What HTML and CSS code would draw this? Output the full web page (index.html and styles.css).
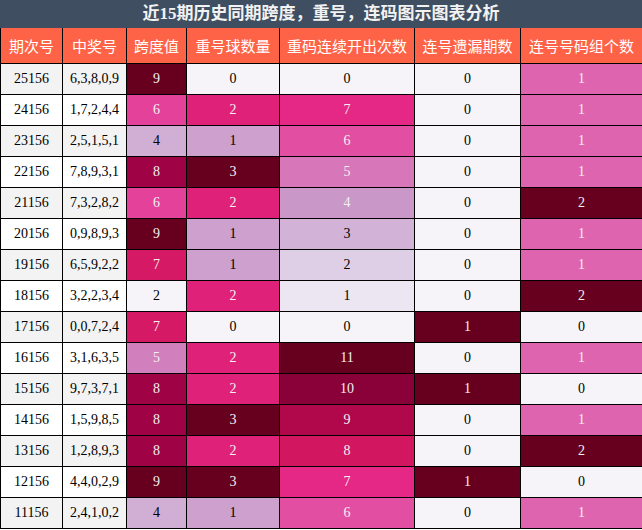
FILE: index.html
```html
<!DOCTYPE html>
<html lang="zh">
<head>
<meta charset="utf-8">
<link rel="stylesheet" href="styles.css">
</head>
<body>
<div class="title">近15期历史同期跨度，重号，连码图示图表分析</div>
<table class="grid" id="grid">
<colgroup>
<col class="w1"><col class="w2"><col class="w3"><col class="w4"><col class="w5"><col class="w6"><col class="w7">
</colgroup>
<thead>
<tr><th>期次号</th><th>中奖号</th><th>跨度值</th><th>重号球数量</th><th>重码连续开出次数</th><th>连号遗漏期数</th><th>连号号码组个数</th></tr>
</thead>
<tbody>
<tr><td class="p">25156</td><td class="p">6,3,8,0,9</td><td class="g">9</td><td class="g">0</td><td class="g">0</td><td class="g">0</td><td class="g">1</td></tr>
<tr><td class="p">24156</td><td class="p">1,7,2,4,4</td><td class="g">6</td><td class="g">2</td><td class="g">7</td><td class="g">0</td><td class="g">1</td></tr>
<tr><td class="p">23156</td><td class="p">2,5,1,5,1</td><td class="g">4</td><td class="g">1</td><td class="g">6</td><td class="g">0</td><td class="g">1</td></tr>
<tr><td class="p">22156</td><td class="p">7,8,9,3,1</td><td class="g">8</td><td class="g">3</td><td class="g">5</td><td class="g">0</td><td class="g">1</td></tr>
<tr><td class="p">21156</td><td class="p">7,3,2,8,2</td><td class="g">6</td><td class="g">2</td><td class="g">4</td><td class="g">0</td><td class="g">2</td></tr>
<tr><td class="p">20156</td><td class="p">0,9,8,9,3</td><td class="g">9</td><td class="g">1</td><td class="g">3</td><td class="g">0</td><td class="g">1</td></tr>
<tr><td class="p">19156</td><td class="p">6,5,9,2,2</td><td class="g">7</td><td class="g">1</td><td class="g">2</td><td class="g">0</td><td class="g">1</td></tr>
<tr><td class="p">18156</td><td class="p">3,2,2,3,4</td><td class="g">2</td><td class="g">2</td><td class="g">1</td><td class="g">0</td><td class="g">2</td></tr>
<tr><td class="p">17156</td><td class="p">0,0,7,2,4</td><td class="g">7</td><td class="g">0</td><td class="g">0</td><td class="g">1</td><td class="g">0</td></tr>
<tr><td class="p">16156</td><td class="p">3,1,6,3,5</td><td class="g">5</td><td class="g">2</td><td class="g">11</td><td class="g">0</td><td class="g">1</td></tr>
<tr><td class="p">15156</td><td class="p">9,7,3,7,1</td><td class="g">8</td><td class="g">2</td><td class="g">10</td><td class="g">1</td><td class="g">0</td></tr>
<tr><td class="p">14156</td><td class="p">1,5,9,8,5</td><td class="g">8</td><td class="g">3</td><td class="g">9</td><td class="g">0</td><td class="g">1</td></tr>
<tr><td class="p">13156</td><td class="p">1,2,8,9,3</td><td class="g">8</td><td class="g">2</td><td class="g">8</td><td class="g">0</td><td class="g">2</td></tr>
<tr><td class="p">12156</td><td class="p">4,4,0,2,9</td><td class="g">9</td><td class="g">3</td><td class="g">7</td><td class="g">1</td><td class="g">0</td></tr>
<tr><td class="p">11156</td><td class="p">2,4,1,0,2</td><td class="g">4</td><td class="g">1</td><td class="g">6</td><td class="g">0</td><td class="g">1</td></tr>
</tbody>
</table>
<script src="script.js"></script>
</body>
</html>
```
FILE: styles.css
```css
body {
  margin: 0;
  background: #ffffff;
  font-family: "Liberation Serif", "Noto Sans CJK SC", serif;
}
.title {
  width: 642px;
  height: 28px;
  background: #3f4f61;
  color: #f2f2f2;
  font-weight: bold;
  font-size: 17px;
  line-height: 28px;
  text-align: center;
}
.grid {
  width: 642px;
  border-collapse: collapse;
  table-layout: fixed;
}
.w1 { width: 62px; }
.w2 { width: 64px; }
.w3 { width: 60px; }
.w4 { width: 93px; }
.w5 { width: 135px; }
.w6 { width: 106px; }
.w7 { width: 122px; }
.grid th,
.grid td {
  border: 1px solid #000000;
  padding: 0;
  text-align: center;
  vertical-align: middle;
  box-sizing: content-box;
}
.grid th {
  border-top: none;
  height: 35px;
  background: #ff6347;
  color: #ffffff;
  font-family: "Noto Sans CJK SC", sans-serif;
  font-weight: normal;
  font-size: 15px;
}
.grid td {
  height: 30px;
  font-size: 14px;
  color: #000000;
  background: #ffffff;
}
.grid tbody tr:nth-child(odd) td.p {
  background: #f3f3f3;
}
```
FILE: script.js
```js
(function () {
  var stops = [
    [247, 244, 249], [231, 225, 239], [212, 185, 218], [201, 148, 199],
    [223, 101, 176], [231, 41, 138], [206, 18, 86], [152, 0, 67], [103, 0, 31]
  ];
  function cmap(t) {
    var i = Math.min(255, Math.floor(t * 256));
    var x = (i / 255) * (stops.length - 1);
    var k = Math.min(stops.length - 2, Math.floor(x));
    var f = x - k;
    var a = stops[k], b = stops[k + 1];
    return [0, 1, 2].map(function (j) { return a[j] + (b[j] - a[j]) * f; });
  }
  function lum(c) {
    var v = c.map(function (x) {
      x = x / 255;
      return x <= 0.04045 ? x / 12.92 : Math.pow((x + 0.055) / 1.055, 2.4);
    });
    return 0.2126 * v[0] + 0.7152 * v[1] + 0.0722 * v[2];
  }
  var rows = document.querySelectorAll('#grid tbody tr');
  for (var col = 2; col < 7; col++) {
    var vals = [];
    rows.forEach(function (r) { vals.push(parseFloat(r.children[col].textContent)); });
    var mn = Math.min.apply(null, vals), mx = Math.max.apply(null, vals);
    rows.forEach(function (r, idx) {
      var t = mx === mn ? 0 : (vals[idx] - mn) / (mx - mn);
      var c = cmap(t);
      var cell = r.children[col];
      cell.style.background = 'rgb(' + c.map(Math.round).join(',') + ')';
      cell.style.color = lum(c) < 0.408 ? '#f1f1f1' : '#000000';
    });
  }
})();
```
